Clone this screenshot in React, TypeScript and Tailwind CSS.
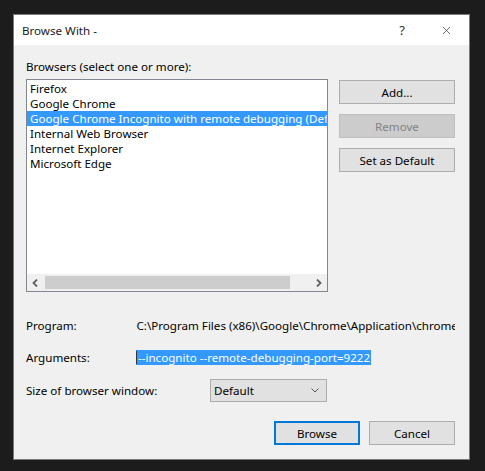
import { X } from "lucide-react";

const browsers = [
  "Firefox",
  "Google Chrome",
  "Google Chrome Incognito with remote debugging (Default)",
  "Internal Web Browser",
  "Internet Explorer",
  "Microsoft Edge",
];

const SideButton = ({ label, disabled }: { label: string; disabled?: boolean }) => (
  <div
    className={
      disabled
        ? "h-[24px] w-[116px] flex items-center justify-center border border-[#bfbfbf] bg-[#cccccc] text-[#838383]"
        : "h-[24px] w-[116px] flex items-center justify-center border border-[#adadad] bg-[#e1e1e1] text-black"
    }
  >
    {label}
  </div>
);

export default function App() {
  return (
    <div
      className="w-[485px] h-[471px] bg-[#1c1c1c] pt-[14px] pl-[13px] text-[11.6px] leading-[15px] text-black"
      style={{ fontFamily: '"Noto Sans", "Liberation Sans", sans-serif' }}
    >
      <div className="w-[457px] h-[446px] border border-[#7a7a7a] bg-[#f0f0f0] flex flex-col">
        {/* title bar */}
        <div className="h-[30px] bg-white flex items-center pl-[8px] pr-[16px] shrink-0">
          <span className="text-[11.6px] text-[#1a1a1a]">Browse With -</span>
          <span className="ml-auto mr-[35px] text-[13px] text-[#333]">?</span>
          <X className="w-[13px] h-[13px] text-[#222]" strokeWidth={1.2} />
        </div>

        <div className="flex flex-col pl-[12px] pr-[14px] pt-[14px]">
          <div className="h-[15px]">Browsers (select one or more):</div>

          <div className="flex mt-[5px]">
            {/* list box */}
            <div className="w-[302px] h-[213px] border border-[#828790] bg-white flex flex-col overflow-hidden">
              <div className="flex-1 pt-[1px]">
                {browsers.map((b, i) => (
                  <div
                    key={b}
                    className={
                      i === 2
                        ? "h-[15px] pl-[3px] bg-[#3399ff] text-white whitespace-nowrap overflow-hidden"
                        : "h-[15px] pl-[3px] whitespace-nowrap overflow-hidden"
                    }
                  >
                    {b}
                  </div>
                ))}
              </div>
              <div className="h-[17px] bg-[#f0f0f0] flex items-center shrink-0">
                <div className="w-[17px] h-[17px] flex items-center justify-center">
                  <svg width="7" height="8" viewBox="0 0 7 8">
                    <path d="M5 0.5 L1.5 4 L5 7.5" fill="none" stroke="#606060" strokeWidth="1.8" />
                  </svg>
                </div>
                <div className="h-[13px] w-[245px] bg-[#cdcdcd] ml-[1px]" />
                <div className="ml-auto w-[17px] h-[17px] flex items-center justify-center">
                  <svg width="7" height="8" viewBox="0 0 7 8">
                    <path d="M2 0.5 L5.5 4 L2 7.5" fill="none" stroke="#606060" strokeWidth="1.8" />
                  </svg>
                </div>
              </div>
            </div>

            {/* side buttons */}
            <div className="flex flex-col gap-[10px] ml-[11px] mt-[1px]">
              <SideButton label="Add..." />
              <SideButton label="Remove" disabled />
              <SideButton label="Set as Default" />
            </div>
          </div>

          <div className="flex mt-[26px] h-[15px] whitespace-nowrap">
            <div className="w-[111px]">Program:</div>
            <div className="w-[320px] overflow-hidden">C:\Program Files (x86)\Google\Chrome\Application\chrome.exe</div>
          </div>

          <div className="flex mt-[17px] h-[15px] whitespace-nowrap">
            <div className="w-[110px]">Arguments:</div>
            <div className="flex items-center bg-[#3399ff] text-white h-[15px] pr-[1px]">
              <span className="w-[1px] h-[13px] bg-[#333] mr-[1px]" />
              --incognito --remote-debugging-port=9222
            </div>
          </div>

          <div className="flex items-center mt-[14px]">
            <div className="w-[184px]">Size of browser window:</div>
            <div className="w-[117px] h-[23px] border border-[#adadad] bg-[#e1e1e1] flex items-center pl-[3px] pr-[7px]">
              <span>Default</span>
              <svg className="ml-auto" width="8" height="5" viewBox="0 0 8 5">
                <path d="M0.5 0.5 L4 4 L7.5 0.5" fill="none" stroke="#555" strokeWidth="1" />
              </svg>
            </div>
          </div>

          <div className="flex justify-end gap-[9px] mt-[19px]">
            <div className="w-[86px] h-[24px] border-2 border-[#0078d7] bg-[#e1e1e1] flex items-center justify-center">
              Browse
            </div>
            <div className="w-[86px] h-[24px] border border-[#adadad] bg-[#e1e1e1] flex items-center justify-center">
              Cancel
            </div>
          </div>
        </div>
      </div>
    </div>
  );
}
